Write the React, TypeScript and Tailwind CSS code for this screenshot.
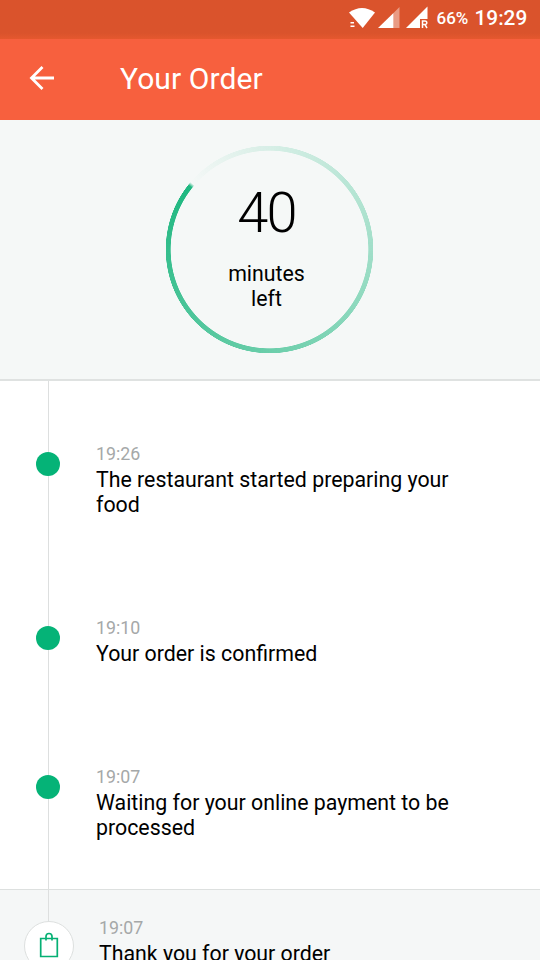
import React from "react";

type Step = { time: string; text: string; box: string };

const steps: Step[] = [
  { time: "19:26", text: "The restaurant started preparing your food", box: "mt-[61px] h-[174px]" },
  { time: "19:10", text: "Your order is confirmed", box: "h-[149px]" },
  { time: "19:07", text: "Waiting for your online payment to be processed", box: "h-[124px]" },
];

function StatusBar() {
  return (
    <div className="flex h-[39px] items-start justify-end bg-linear-to-b from-[#da532c] from-85% to-[#e5582f] text-white">
      <svg className="h-[38px] w-[90px]" viewBox="0 0 90 38" fill="#fff">
        <path d="M8 12.500Q21 3.500 34 12.500L21.700 28Z" />
        <path d="M9.500 22h3.500v1.500h-3.500zM9.500 25.500h4v1.500h-4z" />
        <path d="M37 28L52.500 13V28Z" />
        <path d="M52.500 13L58.500 7V28H52.500Z" opacity=".42" />
        <path d="M65 28L86.500 6.500V19H79V28Z" />
        <path d="M81.500 28V21H84a1.800 1.800 0 0 1 0 3.600H81.500M84 24.600l2 3.400" fill="none" stroke="#fff" strokeWidth="1.500" />
      </svg>
      <span className="ml-[6px] w-[38px] text-[17px] leading-[37px] font-medium whitespace-nowrap">66%</span>
      <span className="w-[65.500px] text-[20.800px] leading-[37px] font-medium whitespace-nowrap">19:29</span>
    </div>
  );
}

function Header() {
  return (
    <header className="flex h-[81px] items-center bg-[#f7603e] text-white">
      <svg className="ml-[28px] h-[28px] w-[28px] -translate-y-[2px]" viewBox="0 0 28 28" fill="none" stroke="#fff" strokeWidth="2.800">
        <path d="M26 14H4M14.500 3L3.500 14L14.500 25" />
      </svg>
      <h1 className="ml-[64px] -translate-y-px text-[30px] leading-[80px] tracking-[0.100px]">Your Order</h1>
    </header>
  );
}

function Countdown() {
  return (
    <section className="flex h-[261px] justify-center border-b-2 border-[#dfe2e1] bg-[#f5f8f7]">
      <div className="relative mt-[25px] -ml-px h-[209px] w-[209px]">
        <div className="absolute inset-0 rounded-full bg-[conic-gradient(from_310.500deg,rgba(7,176,115,0),rgba(7,176,115,0.9)_356deg,rgba(7,176,115,0.9)_358deg,rgba(7,176,115,0))] mask-[radial-gradient(circle,transparent_98.5px,black_99.2px,black_103.5px,transparent_104px)]" />
        <div className="relative -ml-[6px] pt-[35px] text-center text-black">
          <div className="text-[56px] leading-[66px] font-light tracking-[-1.700px]">40</div>
          <div className="mt-[16px] text-[21.300px] leading-[24.500px]">minutes<br />left</div>
        </div>
      </div>
    </section>
  );
}

function Caption({ time, text }: { time: string; text: string }) {
  return (
    <div className="w-[375px]">
      <div className="text-[17.800px] leading-[24px] text-[#a5a8a8]">{time}</div>
      <div className="mt-[2px] text-[21.330px] leading-[24.500px] text-black">{text}</div>
    </div>
  );
}

export default function App() {
  return (
    <main className="flex h-[960px] w-[540px] flex-col overflow-hidden bg-white font-[Roboto,sans-serif]">
      <StatusBar />
      <Header />
      <Countdown />
      <section className="relative flex h-[508px] shrink-0 flex-col overflow-hidden">
        <div className="absolute top-0 left-[48px] h-full w-px bg-[#dddfdf]" />
        {steps.map((s) => (
          <div key={s.text} className={`flex shrink-0 items-start ${s.box}`}>
            <div className="relative mt-[10px] mr-[36px] ml-[36px] h-[24px] w-[24px] rounded-full bg-[#05b377]" />
            <Caption time={s.time} text={s.text} />
          </div>
        ))}
      </section>
      <section className="relative flex h-[71px] shrink-0 items-start overflow-hidden border-t border-[#dde0df] bg-[#f5f7f7]">
        <div className="absolute top-0 left-[48px] h-[32px] w-px bg-[#dddfdf]" />
        <div className="relative mt-[31px] mr-[25px] ml-[24px] flex h-[50px] w-[50px] shrink-0 justify-center rounded-full border-[1.500px] border-[#dde0df] bg-white">
          <svg className="mt-[10px] h-[28px] w-[20px]" viewBox="0 0 20 28" fill="none" stroke="#05b074" strokeWidth="1.700">
            <path d="M1.700 6.500H18.300V24.500H1.700ZM7 8.500V4.500Q7 1.500 10 1.500T13 4.500V8.500" />
          </svg>
        </div>
        <div className="mt-[26px]"><Caption time="19:07" text="Thank you for your order" /></div>
      </section>
    </main>
  );
}
